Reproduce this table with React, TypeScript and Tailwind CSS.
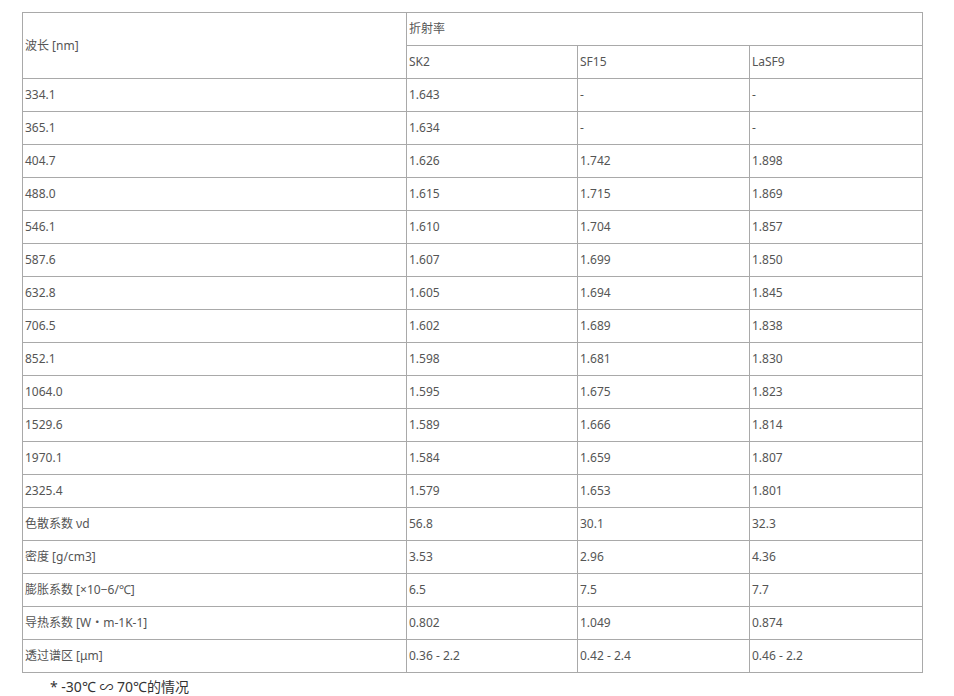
import React from 'react';

const rows: string[][] = [
  ['334.1', '1.643', '-', '-'],
  ['365.1', '1.634', '-', '-'],
  ['404.7', '1.626', '1.742', '1.898'],
  ['488.0', '1.615', '1.715', '1.869'],
  ['546.1', '1.610', '1.704', '1.857'],
  ['587.6', '1.607', '1.699', '1.850'],
  ['632.8', '1.605', '1.694', '1.845'],
  ['706.5', '1.602', '1.689', '1.838'],
  ['852.1', '1.598', '1.681', '1.830'],
  ['1064.0', '1.595', '1.675', '1.823'],
  ['1529.6', '1.589', '1.666', '1.814'],
  ['1970.1', '1.584', '1.659', '1.807'],
  ['2325.4', '1.579', '1.653', '1.801'],
  ['色散系数 νd', '56.8', '30.1', '32.3'],
  ['密度 [g/cm3]', '3.53', '2.96', '4.36'],
  ['膨胀系数 [×10−6/℃]', '6.5', '7.5', '7.7'],
  ['导热系数 [W・m-1K-1]', '0.802', '1.049', '0.874'],
  ['透过谱区 [μm]', '0.36 - 2.2', '0.42 - 2.4', '0.46 - 2.2'],
];

const cell = 'border border-[#a9a9a9] h-[33px] px-[2px] py-0 align-middle text-left font-normal';

export default function App() {
  return (
    <div
      className="bg-white min-h-[696px] pt-[12px] pl-[22px] text-[#555] text-[12px] leading-[18px]"
      style={{ fontFamily: '"Noto Sans", "Noto Sans CJK SC", sans-serif' }}
    >
      <table className="border-collapse table-fixed w-[900px]">
        <colgroup>
          <col className="w-[384px]" />
          <col className="w-[171px]" />
          <col className="w-[172px]" />
          <col className="w-[173px]" />
        </colgroup>
        <thead>
          <tr>
            <th rowSpan={2} className={cell}>波长 [nm]</th>
            <th colSpan={3} className={cell}>折射率</th>
          </tr>
          <tr>
            <th className={cell}>SK2</th>
            <th className={cell}>SF15</th>
            <th className={cell}>LaSF9</th>
          </tr>
        </thead>
        <tbody>
          {rows.map((r, i) => (
            <tr key={i}>
              {r.map((v, j) => (
                <td key={j} className={cell}>{v}</td>
              ))}
            </tr>
          ))}
        </tbody>
      </table>
      <p className="pl-[28px] mt-[4px] text-[14px] leading-[20px] text-[#333]">* -30℃ ∽ 70℃的情况</p>
    </div>
  );
}
